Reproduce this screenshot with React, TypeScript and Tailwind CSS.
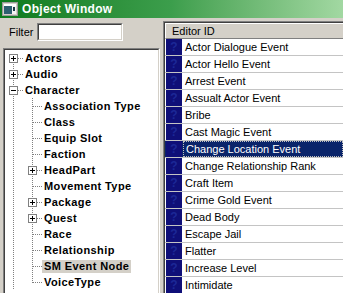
const tree = [
  { label: 'Actors', level: 0, box: 'plus', first: true },
  { label: 'Audio', level: 0, box: 'plus' },
  { label: 'Character', level: 0, box: 'minus' },
  { label: 'Association Type', level: 1 },
  { label: 'Class', level: 1 },
  { label: 'Equip Slot', level: 1 },
  { label: 'Faction', level: 1 },
  { label: 'HeadPart', level: 1, box: 'plus' },
  { label: 'Movement Type', level: 1 },
  { label: 'Package', level: 1, box: 'plus' },
  { label: 'Quest', level: 1, box: 'plus' },
  { label: 'Race', level: 1 },
  { label: 'Relationship', level: 1 },
  { label: 'SM Event Node', level: 1, selected: true },
  { label: 'VoiceType', level: 1, last: true },
]

const events = [
  'Actor Dialogue Event',
  'Actor Hello Event',
  'Arrest Event',
  'Assualt Actor Event',
  'Bribe',
  'Cast Magic Event',
  'Change Location Event',
  'Change Relationship Rank',
  'Craft Item',
  'Crime Gold Event',
  'Dead Body',
  'Escape Jail',
  'Flatter',
  'Increase Level',
  'Intimidate',
]

type Node = {
  label: string
  level: number
  box?: string
  first?: boolean
  last?: boolean
  selected?: boolean
}

function Box({ x, kind }: { x: number; kind: string }) {
  return (
    <g shapeRendering="crispEdges">
      <rect x={x + 0.5} y={4.5} width={8} height={8} fill="#fff" stroke="#808080" />
      <line x1={x + 2} y1={8.5} x2={x + 7} y2={8.5} stroke="#000" />
      {kind === 'plus' && <line x1={x + 4.5} y1={6} x2={x + 4.5} y2={11} stroke="#000" />}
    </g>
  )
}

function Connector({ node }: { node: Node }) {
  const w = node.level === 0 ? 18 : 37
  const dot = { stroke: '#808080', strokeDasharray: '1 1', shapeRendering: 'crispEdges' as const }
  return (
    <svg width={w} height={16} className="shrink-0">
      <line x1={8.5} y1={node.first ? 8 : 0} x2={8.5} y2={16} {...dot} />
      {node.level === 0 ? (
        <>
          <line x1={13} y1={8.5} x2={18} y2={8.5} {...dot} />
          {node.box && <Box x={4} kind={node.box} />}
        </>
      ) : (
        <>
          <line x1={27.5} y1={0} x2={27.5} y2={node.last ? 9 : 16} {...dot} />
          <line x1={28} y1={8.5} x2={37} y2={8.5} {...dot} />
          {node.box && <Box x={23} kind={node.box} />}
        </>
      )}
    </svg>
  )
}

function TitleIcon() {
  return (
    <svg width="16" height="14" viewBox="0 0 16 14" shapeRendering="crispEdges">
      <rect x="0.5" y="0.5" width="15" height="13" fill="#d4d0c8" stroke="#9a9a9a" />
      <rect x="2" y="2" width="12" height="2" fill="#ffffff" />
      <rect x="2" y="4" width="8" height="8" fill="#2d5f70" />
      <rect x="10" y="4" width="4" height="8" fill="#f4f4f4" />
      <rect x="11" y="5" width="2" height="4" fill="#1b3a46" />
    </svg>
  )
}

export default function App() {
  return (
    <div className="w-[343px] h-[293px] overflow-hidden bg-[#d4d0c8] flex flex-col font-['Liberation_Sans',Arial,sans-serif] text-black select-none">
      <div className="h-[18px] shrink-0 flex items-center gap-[4px] pl-[2px] bg-gradient-to-r from-[#0b7a1c] via-[#3c9e4c] to-[#a2d8a2]">
        <TitleIcon />
        <span className="text-[12px] font-bold text-white leading-none tracking-[0.3px]">Object Window</span>
      </div>
      <div className="flex flex-1 min-h-0">
        <div className="w-[160px] shrink-0 pl-[3px] flex flex-col">
          <div className="h-[30px] shrink-0 flex items-start pt-[5px]">
            <span className="ml-[6px] w-[28px] h-[18px] flex items-center text-[11px]">Filter</span>
            <div className="w-[86px] h-[18px] bg-white border-t border-l border-[#808080] border-b border-r border-b-white border-r-white">
              <div className="h-full border-t border-l border-[#404040] border-b border-r border-b-[#d4d0c8] border-r-[#d4d0c8]" />
            </div>
          </div>
          <div className="flex-1 min-h-0 border-t border-l border-[#808080] border-r border-r-white">
            <div className="h-full bg-white border-t border-l border-[#404040] border-r border-r-[#d4d0c8] overflow-hidden">
              {tree.map((n) => (
                <div key={n.label} className="h-[16px] flex items-center">
                  <Connector node={n} />
                  <span
                    className={`h-[13px] leading-[13px] px-[2px] text-[11px] font-bold tracking-[0.4px] whitespace-nowrap ${
                      n.selected ? 'bg-[#d4d0c8]' : ''
                    }`}
                  >
                    {n.label}
                  </span>
                </div>
              ))}
            </div>
          </div>
        </div>
        <div className="flex-1 min-w-0 ml-[3px] mt-[3px] border-t border-l border-[#808080]">
          <div className="h-full bg-white border-t border-l border-[#404040] overflow-hidden">
            <div className="h-[16px] bg-[#d4d0c8] border-t border-l border-white border-b border-b-[#808080] flex items-center pl-[6px] text-[11px] whitespace-nowrap">
              Editor ID
            </div>
            {events.map((e, i) => {
              const sel = i === 6
              return (
                <div
                  key={e}
                  className={`h-[17px] flex border-b border-[#c4c4c4] pl-[1px] ${sel ? 'bg-[#0a246a] text-white' : ''}`}
                >
                  <span className="w-[16px] h-[16px] shrink-0 bg-[#0f0f78] flex items-center justify-center text-[12px] font-bold text-[#1c2896] leading-none">
                    ?
                  </span>
                  <span
                    className={`flex-1 ml-[1px] pl-[2px] h-[16px] flex items-center text-[11px] whitespace-nowrap ${
                      sel ? 'border border-dotted border-[#c0c0c0] pl-[1px]' : ''
                    }`}
                  >
                    {e}
                  </span>
                </div>
              )
            })}
          </div>
        </div>
      </div>
    </div>
  )
}
